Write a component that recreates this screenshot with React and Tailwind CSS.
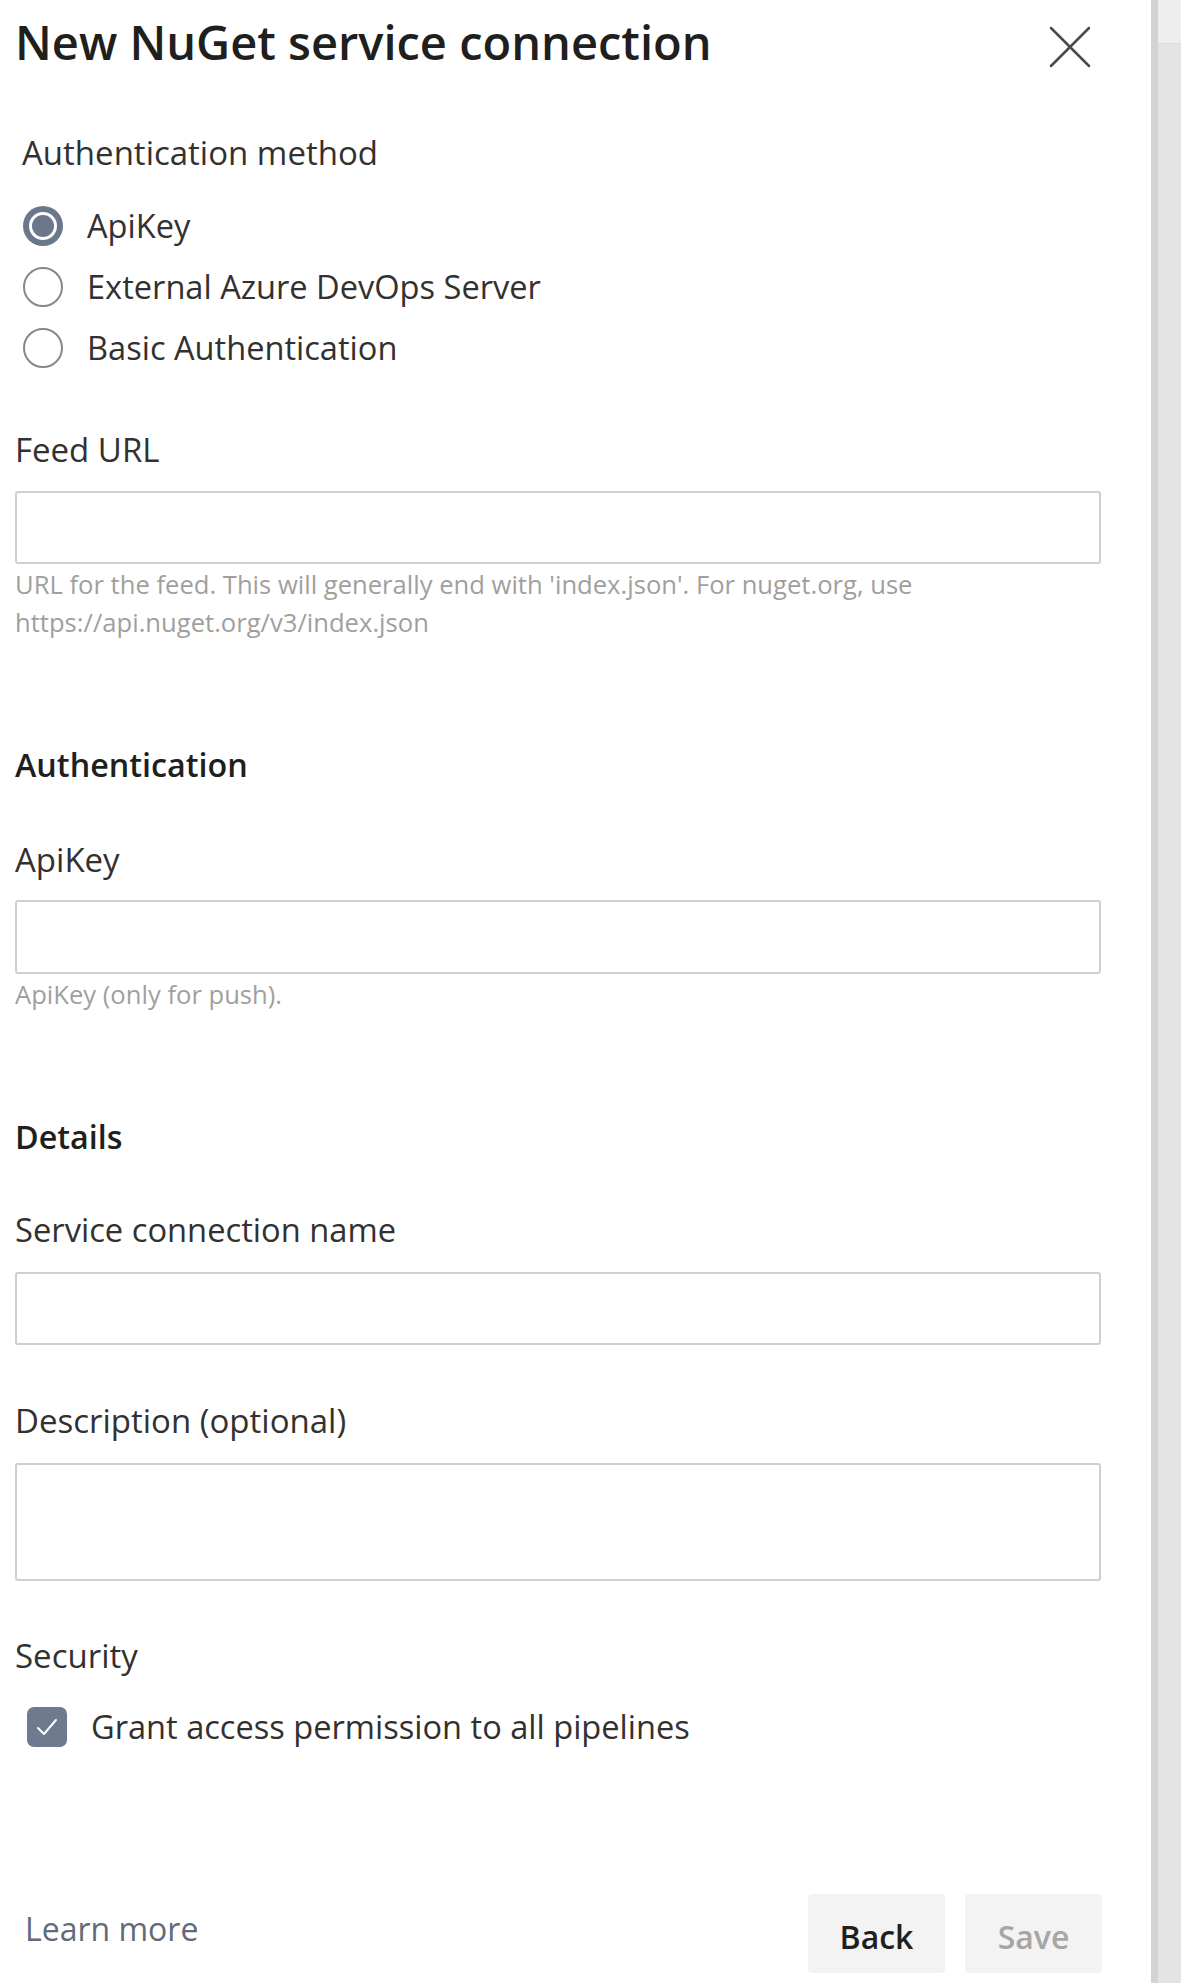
import React from "react";

function Radio({ checked, label }) {
  return (
    <div className="flex h-[61px] items-center">
      {checked ? (
        <div className="ml-[8px] flex h-[40px] w-[40px] items-center justify-center rounded-full bg-[#6b778a]">
          <div className="h-[28px] w-[28px] rounded-full border-[3px] border-white bg-[#6b778a]" />
        </div>
      ) : (
        <div className="ml-[8px] h-[40px] w-[40px] rounded-full border-2 border-[#8a8886]" />
      )}
      <span className="ml-[24px] text-[32.6px] leading-[44px] text-[#323130]">{label}</span>
    </div>
  );
}

function Input({ h = "h-[73px]" }) {
  return <div className={`${h} w-[1086px] rounded-[3px] border-2 border-[#cfcfcf] bg-white`} />;
}

export default function App() {
  return (
    <div
      className="flex h-[1983px] w-[1181px] overflow-hidden bg-white"
      style={{ fontFamily: '"Open Sans", "Noto Sans", sans-serif' }}
    >
      <div className="flex w-[1151px] flex-col pl-[15px]">
        <div className="mt-[14px] flex items-start justify-between">
          <h1 className="text-[47px] font-semibold leading-[56px] text-[#201f1e]">
            New NuGet service connection
          </h1>
          <svg
            className="mr-[60px] mt-[12px]"
            width="42"
            height="42"
            viewBox="0 0 42 42"
            fill="none"
            stroke="#4a4a4a"
            strokeWidth="2.5"
            strokeLinecap="round"
          >
            <path d="M2 2 L40 40 M40 2 L2 40" />
          </svg>
        </div>

        <div className="ml-[7px] mt-[61px] text-[33px] leading-[44px] text-[#323130]">
          Authentication method
        </div>
        <div className="mt-[20px] flex flex-col">
          <Radio checked label="ApiKey" />
          <Radio label="External Azure DevOps Server" />
          <Radio label="Basic Authentication" />
        </div>

        <div className="mt-[50px] text-[33px] leading-[44px] text-[#323130]">Feed URL</div>
        <div className="mt-[19px]">
          <Input />
        </div>
        <div className="mt-[2px] text-[25.6px] leading-[38px] text-[#a19f9d]">
          URL for the feed. This will generally end with 'index.json'. For nuget.org, use
          <br />
          https://api.nuget.org/v3/index.json
        </div>

        <div className="mt-[100px] text-[32.3px] font-semibold leading-[44px] text-[#201f1e]">
          Authentication
        </div>
        <div className="mt-[52px] text-[33px] leading-[44px] text-[#323130]">ApiKey</div>
        <div className="mt-[18px]">
          <Input h="h-[74px]" />
        </div>
        <div className="mt-[2px] text-[25.6px] leading-[38px] text-[#a19f9d]">ApiKey (only for push).</div>

        <div className="mt-[100px] text-[32.3px] font-semibold leading-[44px] text-[#201f1e]">Details</div>
        <div className="mt-[50px] text-[32.7px] leading-[44px] text-[#323130]">Service connection name</div>
        <div className="mt-[20px]">
          <Input />
        </div>
        <div className="mt-[54px] text-[33px] leading-[44px] text-[#323130]">Description (optional)</div>
        <div className="mt-[20px]">
          <Input h="h-[118px]" />
        </div>

        <div className="mt-[53px] text-[33px] leading-[44px] text-[#323130]">Security</div>
        <div className="mt-[27px] flex h-[44px] items-center">
          <div className="ml-[12px] flex h-[40px] w-[40px] items-center justify-center rounded-[7px] bg-[#6e7b8e]">
            <svg width="28" height="28" viewBox="0 0 28 28" fill="none" stroke="white" strokeWidth="2" strokeLinecap="round" strokeLinejoin="round">
              <path d="M5 15 L11 21 L23 7" />
            </svg>
          </div>
          <span className="ml-[24px] text-[32.6px] leading-[44px] text-[#323130]">
            Grant access permission to all pipelines
          </span>
        </div>

        <div className="mt-[145px] flex h-[79px] items-center justify-between pr-[49px]">
          <span className="mb-[10px] ml-[10px] text-[32px] leading-[44px] text-[#5f6b7c]">Learn more</span>
          <div className="flex h-full gap-[20px]">
            <button className="flex h-full w-[137px] items-center justify-center rounded-[4px] bg-[#f3f3f3] pt-[6px] text-[32px] font-semibold text-[#201f1e]">
              Back
            </button>
            <button className="flex h-full w-[137px] items-center justify-center rounded-[4px] bg-[#f3f3f3] pt-[6px] text-[32px] font-semibold text-[#a6a6a6]">
              Save
            </button>
          </div>
        </div>
      </div>

      <div className="flex w-[30px] flex-col border-l-[7px] border-[#d3d3d3]">
        <div className="h-[43px] bg-[#eeeeee]" />
        <div className="flex-1 border-t border-[#dcdcdc] bg-[#e4e4e4]" />
      </div>
    </div>
  );
}
